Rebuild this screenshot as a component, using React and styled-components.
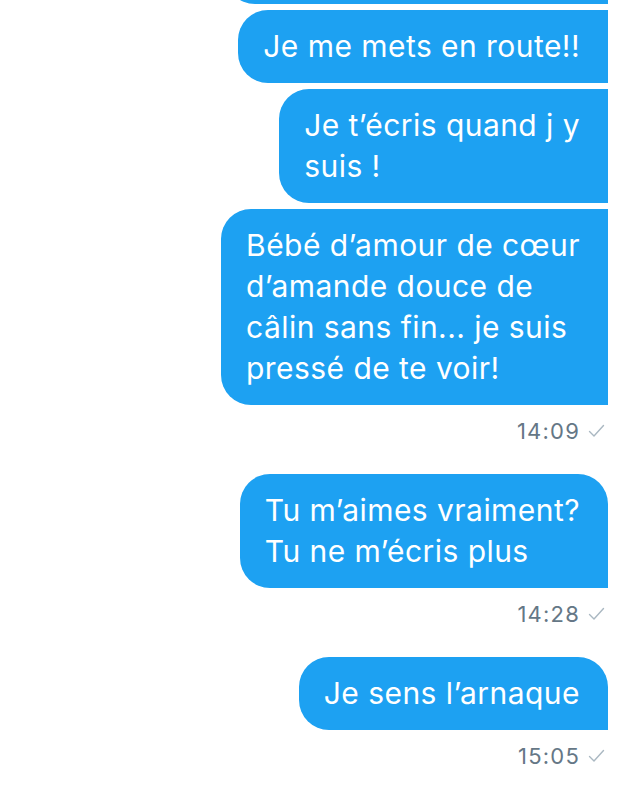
import React from "react";
import styled, { createGlobalStyle } from "styled-components";

const messages = [
  { id: 0, lines: [""], hidden: true },
  { id: 1, lines: ["Je me mets en route!!"] },
  { id: 2, lines: ["Je t\u2019écris quand j y", "suis !"] },
  {
    id: 3,
    lines: [
      "Bébé d\u2019amour de cœur",
      "d\u2019amande douce de",
      "câlin sans fin... je suis",
      "pressé de te voir!",
    ],
    time: "14:09",
  },
  {
    id: 4,
    lines: ["Tu m\u2019aimes vraiment?", "Tu ne m\u2019écris plus"],
    time: "14:28",
    first: true,
  },
  { id: 5, lines: ["Je sens l\u2019arnaque"], time: "15:05", first: true },
];

const Check = () => (
  <svg width="17" height="14" viewBox="0 0 17 14" fill="none">
    <path
      d="M1.5 7.5 L6 12 L15.5 1.5"
      stroke="#aab8c2"
      strokeWidth="1.4"
      strokeLinecap="round"
      strokeLinejoin="round"
    />
  </svg>
);

const App = () => {
  return (
    <>
      <GlobalStyle />
      <Screen>
        <Thread>
          {messages.map((m) => (
            <React.Fragment key={m.id}>
              <Bubble $first={m.first} $hidden={m.hidden}>
                {m.lines.map((line, i) => (
                  <Line key={i}>{line}</Line>
                ))}
              </Bubble>
              {m.time && (
                <Meta>
                  <Time>{m.time}</Time>
                  <Check />
                </Meta>
              )}
            </React.Fragment>
          ))}
        </Thread>
      </Screen>
    </>
  );
};

const GlobalStyle = createGlobalStyle`
  html, body {
    margin: 0;
    padding: 0;
    background: #ffffff;
  }
  body {
    font-family: Inter, "Liberation Sans", Arial, sans-serif;
    -webkit-font-smoothing: antialiased;
  }
`;

const Screen = styled.div`
  width: 633px;
  height: 789px;
  overflow: hidden;
  background: #ffffff;
`;

const Thread = styled.div`
  display: flex;
  flex-direction: column;
  align-items: flex-end;
  gap: 6px;
  padding-right: 25px;
  margin-top: -69px;
`;

const Bubble = styled.div`
  background: #1da1f2;
  color: #ffffff;
  padding: 16px 28px 16px 25px;
  min-width: ${(p) => (p.$hidden ? "330px" : "0")};
  border-radius: ${(p) => (p.$first ? "30px 30px 0 30px" : "30px 0 0 30px")};
  font-size: 30px;
  font-weight: 400;
  line-height: 41px;
  letter-spacing: 0.45px;
`;

const Line = styled.div`
  white-space: nowrap;
  min-height: 41px;
`;

const Meta = styled.div`
  display: flex;
  align-items: center;
  gap: 8px;
  height: 26px;
  margin: 7px 3px 24px 0;
`;

const Time = styled.span`
  color: #657786;
  font-size: 22px;
  line-height: 26px;
  letter-spacing: 1.2px;
`;

export default App;
